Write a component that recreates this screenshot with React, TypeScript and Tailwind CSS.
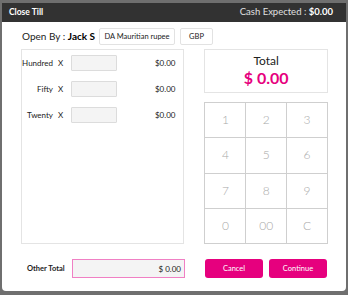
import React from 'react';

const rows = [
  { label: 'Hundred', amount: '$0.00' },
  { label: 'Fifty', amount: '$0.00' },
  { label: 'Twenty', amount: '$0.00' },
];

const keys = ['1', '2', '3', '4', '5', '6', '7', '8', '9', '0', '00', 'C'];

export default function App() {
  return (
    <div
      className="w-[348px] h-[295px] bg-[#6f6f6f] overflow-hidden pt-[3px] pl-[2px] whitespace-nowrap"
      style={{ fontFamily: 'Lato, "Open Sans", sans-serif' }}
    >
      <div className="w-[344px] h-[288px] bg-white rounded-b-[4px] flex flex-col">
        <div className="h-[19px] bg-[#323232] flex items-center justify-between pl-[7px] pr-[13px] text-white">
          <span className="text-[8.5px] font-bold">Close Till</span>
          <span className="text-[9.5px] text-[#e0e0e0]">
            Cash Expected : <span className="font-bold text-white">$0.00</span>
          </span>
        </div>

        <div className="pl-[19px] pr-[18px] flex flex-col">
          <div className="mt-[6px] h-[17px] flex items-center">
            <span className="text-[10px] text-[#222] ml-[1px] w-[77px]">
              Open By : <span className="font-bold text-black">Jack S</span>
            </span>
            <span className="h-[17px] w-[76px] border border-[#e2e2e2] rounded-[2px] flex items-center justify-center text-[7.5px] text-[#222]">
              DA Mauritian rupee
            </span>
            <span className="ml-[5px] h-[17px] w-[33px] border border-[#e2e2e2] rounded-[2px] flex items-center justify-center text-[7.5px] text-[#222]">
              GBP
            </span>
          </div>

          <div className="mt-[4px] flex gap-[20px]">
            <div className="w-[164px] h-[195px] border border-[#e4e4e4] pt-[5px] flex flex-col gap-[10px]">
              {rows.map((r) => (
                <div key={r.label} className="flex items-center h-[16px] text-[8px] text-[#222]">
                  <span className="w-[31px] text-right">{r.label}</span>
                  <span className="ml-[5px] w-[13px]">X</span>
                  <span className="w-[46px] h-[16px] bg-[#f4f4f4] border border-[#dcdcdc] rounded-[1px]" />
                  <span className="ml-auto mr-[8px]">{r.amount}</span>
                </div>
              ))}
            </div>

            <div className="w-[124px] flex flex-col">
              <div className="h-[44px] border border-[#e4e4e4] flex flex-col items-center justify-center">
                <span className="text-[12px] text-[#222] leading-[14px]">Total</span>
                <span className="text-[16px] font-bold text-[#e6007e] leading-[20px]">$ 0.00</span>
              </div>
              <div className="mt-[9px] h-[142px] grid grid-cols-3 grid-rows-4 border-t border-l border-[#cfcfcf]">
                {keys.map((k) => (
                  <div
                    key={k}
                    className="border-r border-b border-[#cfcfcf] flex items-center justify-center text-[12px] font-light text-[#a8a8a8]"
                  >
                    {k}
                  </div>
                ))}
              </div>
            </div>
          </div>

          <div className="mt-[15px] flex items-center">
            <span className="w-[51px] pl-[6px] text-[7.5px] font-bold text-[#222]">Other Total</span>
            <div className="w-[113px] h-[19px] bg-[#f4f4f4] border border-[#f080c4] flex items-center justify-end pr-[3px] text-[8px] text-[#222]">
              $ 0.00
            </div>
            <div className="ml-[20px] flex gap-[6px]">
              <button className="w-[58px] h-[19px] bg-[#e6007e] rounded-[3px] text-white text-[7.5px]">Cancel</button>
              <button className="w-[58px] h-[19px] bg-[#e6007e] rounded-[3px] text-white text-[7.5px]">Continue</button>
            </div>
          </div>
        </div>
      </div>
    </div>
  );
}
